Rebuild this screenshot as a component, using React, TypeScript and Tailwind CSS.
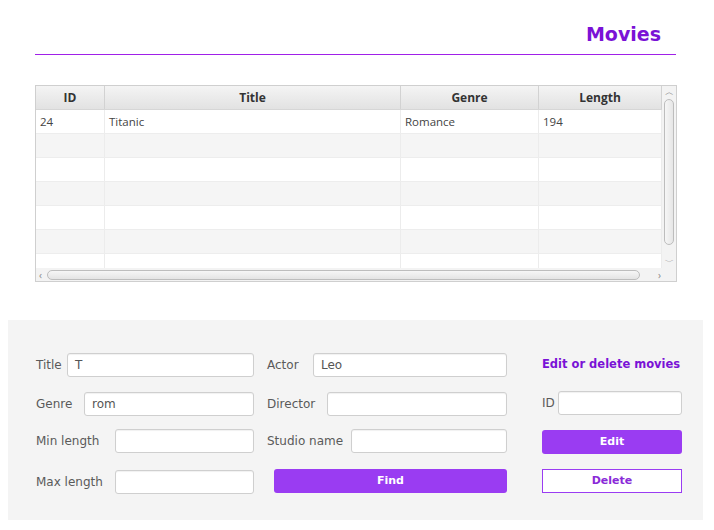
import React from "react";

const purple = "bg-[#9a3cf2]";

function Field({ label, value, inputW, className = "" }: { label: string; value?: string; inputW: string; className?: string }) {
  return (
    <div className={`flex h-6 items-center justify-between ${className}`}>
      <span className="text-[12px] text-[#5a5a5a]">{label}</span>
      <div className={`${inputW} flex h-6 items-center rounded-[3px] border border-[#cfcfcf] bg-white pl-[7px] text-[12px] text-[#555] shadow-[inset_0_1px_1px_rgba(0,0,0,0.06)]`}>
        {value}
      </div>
    </div>
  );
}

const cols = [
  { name: "ID", w: "w-[69px]" },
  { name: "Title", w: "w-[296px]" },
  { name: "Genre", w: "w-[138px]" },
  { name: "Length", w: "w-[123px]" },
];

export default function App() {
  const rows = [["24", "Titanic", "Romance", "194"], [], [], [], [], [], []];

  return (
    <div className="h-[530px] w-[714px] bg-white font-['DejaVu_Sans',sans-serif]">
      <div className="ml-[35px] mr-[38px] flex h-[55px] items-end justify-end border-b border-[#a020e8] pb-[10px] pr-[15px]">
        <h1 className="text-[19px] font-bold leading-none text-[#7a12d6]">Movies</h1>
      </div>

      {/* table */}
      <div className="ml-[35px] mt-[30px] flex h-[197px] w-[642px] flex-col border border-[#cfcfcf] font-['Open_Sans',sans-serif]">
        <div className="flex min-h-0 flex-1">
          <div className="flex min-w-0 flex-1 flex-col overflow-hidden">
            <div className="flex h-[24px] shrink-0 border-b border-[#d6d6d6] bg-gradient-to-b from-[#f4f4f4] to-[#e2e2e2] text-[12px] font-bold text-[#333]">
              {cols.map((c) => (
                <div key={c.name} className={`${c.w} flex shrink-0 items-center justify-center border-r border-[#d2d2d2]`}>
                  {c.name}
                </div>
              ))}
            </div>
            {rows.map((r, i) => (
              <div key={i} className={`flex h-[24px] shrink-0 border-b border-[#ededed] text-[11.5px] text-[#444] ${i % 2 === 1 ? "bg-[#f5f5f5]" : "bg-white"}`}>
                {cols.map((c, j) => (
                  <div key={c.name} className={`${c.w} flex shrink-0 items-center border-r border-[#ececec] pl-[4px]`}>
                    {r[j] ?? ""}
                  </div>
                ))}
              </div>
            ))}
          </div>
          {/* vertical scrollbar */}
          <div className="flex w-[14px] shrink-0 flex-col items-center bg-[#f3f3f3]">
            <span className="mt-[1px] text-[9px] leading-[10px] text-[#888]">︿</span>
            <div className="mt-[2px] h-[146px] w-[10px] rounded-[5px] border border-[#bdbdbd] bg-gradient-to-r from-[#f6f6f6] to-[#e6e6e6]" />
            <span className="mt-auto mb-[1px] text-[9px] leading-[10px] text-[#888]">﹀</span>
          </div>
        </div>
        {/* horizontal scrollbar */}
        <div className="flex h-[13px] shrink-0 items-center bg-[#f3f3f3] px-[3px]">
          <span className="text-[10px] leading-none text-[#888]">‹</span>
          <div className="ml-[5px] h-[10px] w-[593px] rounded-[5px] border border-[#bdbdbd] bg-gradient-to-b from-[#f6f6f6] to-[#e4e4e4]" />
          <span className="ml-auto mr-[12px] text-[10px] leading-none text-[#888]">›</span>
        </div>
      </div>

      {/* search panel */}
      <div className="ml-[8px] mt-[38px] flex h-[200px] w-[695px] bg-[#f4f4f4] pl-[28px] pt-[33px]">
        <div className="flex w-[218px] flex-col">
          <Field label="Title" value="T" inputW="w-[187px]" />
          <Field label="Genre" value="rom" inputW="w-[170px]" className="mt-[15px]" />
          <Field label="Min length" inputW="w-[139px]" className="mt-[13px]" />
          <Field label="Max length" inputW="w-[139px]" className="mt-[17px]" />
        </div>
        <div className="ml-[13px] flex w-[240px] flex-col">
          <Field label="Actor" value="Leo" inputW="w-[194px]" />
          <Field label="Director" inputW="w-[180px]" className="mt-[15px]" />
          <Field label="Studio name" inputW="w-[156px]" className="mt-[13px]" />
          <button className={`ml-[7px] mt-[16px] h-[24px] w-[233px] rounded-[3px] ${purple} text-[11px] font-bold text-white`}>
            Find
          </button>
        </div>
        <div className="ml-[35px] flex w-[140px] flex-col">
          <div className="flex h-6 items-center whitespace-nowrap text-[11.5px] font-bold text-[#7a12d6]">Edit or delete movies</div>
          <Field label="ID" inputW="w-[124px]" className="mt-[14px]" />
          <button className={`mt-[15px] h-[24px] w-[140px] rounded-[3px] ${purple} text-[11px] font-bold text-white`}>Edit</button>
          <button className="mt-[15px] h-[24px] w-[140px] border border-[#9a3cf2] bg-white text-[11px] font-bold text-[#8a2ad8]">
            Delete
          </button>
        </div>
      </div>
    </div>
  );
}
